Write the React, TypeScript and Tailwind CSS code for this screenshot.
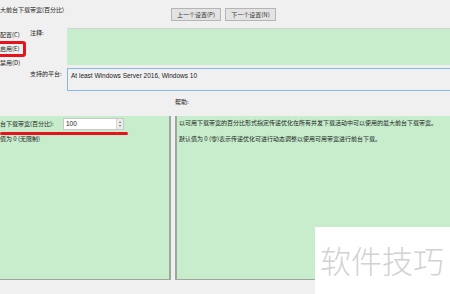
export default function App() {
  return (
    <div className="relative h-[294px] w-[450px] overflow-hidden bg-[#f0f0f0] font-['Noto_Sans_CJK_SC',sans-serif] text-[6px] leading-[8px] text-[#1c1c1c]">
      {/* header row */}
      <div className="flex h-[28px]">
        <div className="w-[171px] pt-[6px]">大前台下载带宽(百分比)</div>
        <div className="flex gap-[4px] pt-[8px]">
          <div className="flex h-[13px] w-[50px] items-center justify-center border border-[#b5b5b5] bg-[#e3e3e3] text-[#333]">
            上一个设置(P)
          </div>
          <div className="flex h-[13px] w-[51px] items-center justify-center border border-[#b5b5b5] bg-[#e3e3e3] text-[#333]">
            下一个设置(N)
          </div>
        </div>
      </div>

      {/* state + comment + platform */}
      <div className="flex h-[66px]">
        <div className="flex w-[30px] flex-col">
          <div className="flex h-[14px] items-center">配置(C)</div>
          <div className="flex h-[14px] items-center">启用(E)</div>
          <div className="flex h-[14px] items-center">禁用(D)</div>
        </div>
        <div className="flex w-[37px] flex-col">
          <div className="h-[40px] pt-[1px]">注释:</div>
          <div className="pt-[2px]">支持的平台:</div>
        </div>
        <div className="flex flex-1 flex-col">
          <div className="h-[37px] border-t border-[#d0d6d0] bg-[#c7edcc]" />
          <div className="mt-[3px] h-[23px] border border-r-0 border-[#86b9e2] px-[3px] pt-[3px] font-['Liberation_Sans',sans-serif] text-[6.5px] text-[#222]">
            At least Windows Server 2016, Windows 10
          </div>
        </div>
      </div>

      {/* help label */}
      <div className="h-[22px] pl-[175px] pt-[4px]">帮助:</div>

      {/* options + help panels */}
      <div className="flex h-[164px] gap-[4px]">
        <div className="w-[171px] border-r-2 border-b border-[#9fa89f] bg-[#c7edcc]">
          <div className="flex items-center pt-[2px]">
            <div className="w-[63px]">台下载带宽(百分比):</div>
            <div className="flex h-[12px] w-[61px] items-center border border-[#c8c8c8] bg-white pl-[2px] font-['Liberation_Sans',sans-serif] text-[6.5px]">
              <span className="flex-1">100</span>
              <div className="flex h-full w-[7px] flex-col items-center justify-center border-l border-[#d8d8d8] bg-[#ececec] text-[3px] leading-[4px] text-[#555]">
                <span>▲</span>
                <span>▼</span>
              </div>
            </div>
          </div>
          <div className="pt-[5px]">值为 0 (无限制)</div>
        </div>
        <div className="flex-1 border-l-2 border-b border-[#9fa89f] bg-[#c7edcc] pl-[2px] pt-[3px]">
          <div>以可用下载带宽的百分比形式指定传递优化在所有并发下载活动中可以使用的最大前台下载带宽。</div>
          <div className="pt-[8px]">默认值为 0 (零)表示传递优化可进行动态调整以使用可用带宽进行前台下载。</div>
        </div>
      </div>

      {/* red annotations */}
      <div className="absolute left-[-4px] top-[41px] h-[16px] w-[30px] rounded-[3px] border-[3px] border-[#e5141c]" />
      <div className="absolute left-0 top-[132px] h-[3px] w-[128px] rounded-full bg-[#e5141c]" />

      {/* watermark */}
      <div className="absolute bottom-0 right-0 h-[67px] w-[135px] bg-white pl-[5px] pt-[17px] text-[31px] font-light leading-none text-[#d2d2d2]">
        软件技巧
      </div>
    </div>
  );
}
